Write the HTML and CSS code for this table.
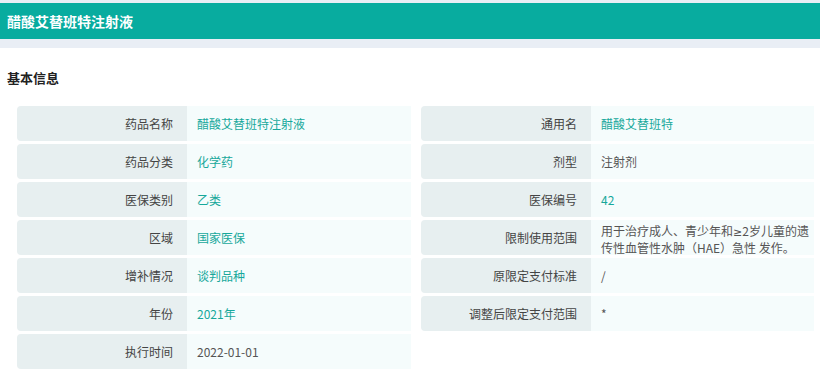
FILE: index.html
```html
<!DOCTYPE html>
<html lang="zh">
<head>
<meta charset="utf-8">
<link rel="stylesheet" href="styles.css">
</head>
<body>
<div class="topline"></div>
<header class="header">醋酸艾替班特注射液</header>
<div class="band"></div>
<main class="content">
  <h2 class="section-title">基本信息</h2>
  <div class="table">
    <div class="col">
      <div class="row"><div class="label">药品名称</div><div class="value teal">醋酸艾替班特注射液</div></div>
      <div class="row"><div class="label">药品分类</div><div class="value teal">化学药</div></div>
      <div class="row"><div class="label">医保类别</div><div class="value teal">乙类</div></div>
      <div class="row"><div class="label">区域</div><div class="value teal">国家医保</div></div>
      <div class="row"><div class="label">增补情况</div><div class="value teal">谈判品种</div></div>
      <div class="row"><div class="label">年份</div><div class="value teal">2021年</div></div>
      <div class="row"><div class="label">执行时间</div><div class="value">2022-01-01</div></div>
    </div>
    <div class="col">
      <div class="row"><div class="label">通用名</div><div class="value teal">醋酸艾替班特</div></div>
      <div class="row"><div class="label">剂型</div><div class="value">注射剂</div></div>
      <div class="row"><div class="label">医保编号</div><div class="value teal">42</div></div>
      <div class="row"><div class="label">限制使用范围</div><div class="value multi"><span class="line">用于治疗成人、青少年和<span class="ge">≥</span>2岁儿童的遗</span><span class="line">传性血管性水肿（HAE）急性 发作。</span></div></div>
      <div class="row"><div class="label">原限定支付标准</div><div class="value">/</div></div>
      <div class="row"><div class="label">调整后限定支付范围</div><div class="value">*</div></div>
    </div>
  </div>
</main>
</body>
</html>
```
FILE: styles.css
```css
* { box-sizing: border-box; }
html, body {
  margin: 0;
  padding: 0;
  background: #ffffff;
  font-family: "Noto Sans CJK SC", "Noto Sans", "Liberation Sans", sans-serif;
}
.topline {
  height: 3px;
  background: #e9eef5;
}
.header {
  height: 36px;
  line-height: 36px;
  background: #08ac9f;
  color: #ffffff;
  font-size: 14px;
  font-weight: bold;
  padding-left: 7px;
}
.band {
  height: 9px;
  background: #e9eef5;
}
.content {
  padding: 0 6px 0 7px;
}
.section-title {
  margin: 0;
  padding-top: 20px;
  height: 58px;
  font-size: 13px;
  line-height: 20px;
  font-weight: bold;
  color: #222;
}
.table {
  display: grid;
  grid-template-columns: 394px 393px;
  column-gap: 10px;
  padding-left: 10px;
}
.col {
  display: flex;
  flex-direction: column;
  gap: 3px;
}
.row {
  display: flex;
  height: 35px;
  font-size: 12px;
}
.label {
  width: 170px;
  flex: none;
  background: #e7eff0;
  border-radius: 4px 0 0 4px;
  text-align: right;
  padding-right: 14px;
  line-height: 35px;
  color: #444;
  white-space: nowrap;
}
.value {
  flex: 1;
  background: #f5fcfc;
  padding: 0 6px 0 10px;
  line-height: 35px;
  color: #555;
}
.value.teal {
  color: #17a89b;
}
.value.multi {
  line-height: 15px;
  padding-top: 3px;
  padding-right: 0;
}
.line {
  display: block;
  white-space: nowrap;
}
.ge {
  font-family: "DejaVu Sans", sans-serif;
  font-size: 11px;
}
```
